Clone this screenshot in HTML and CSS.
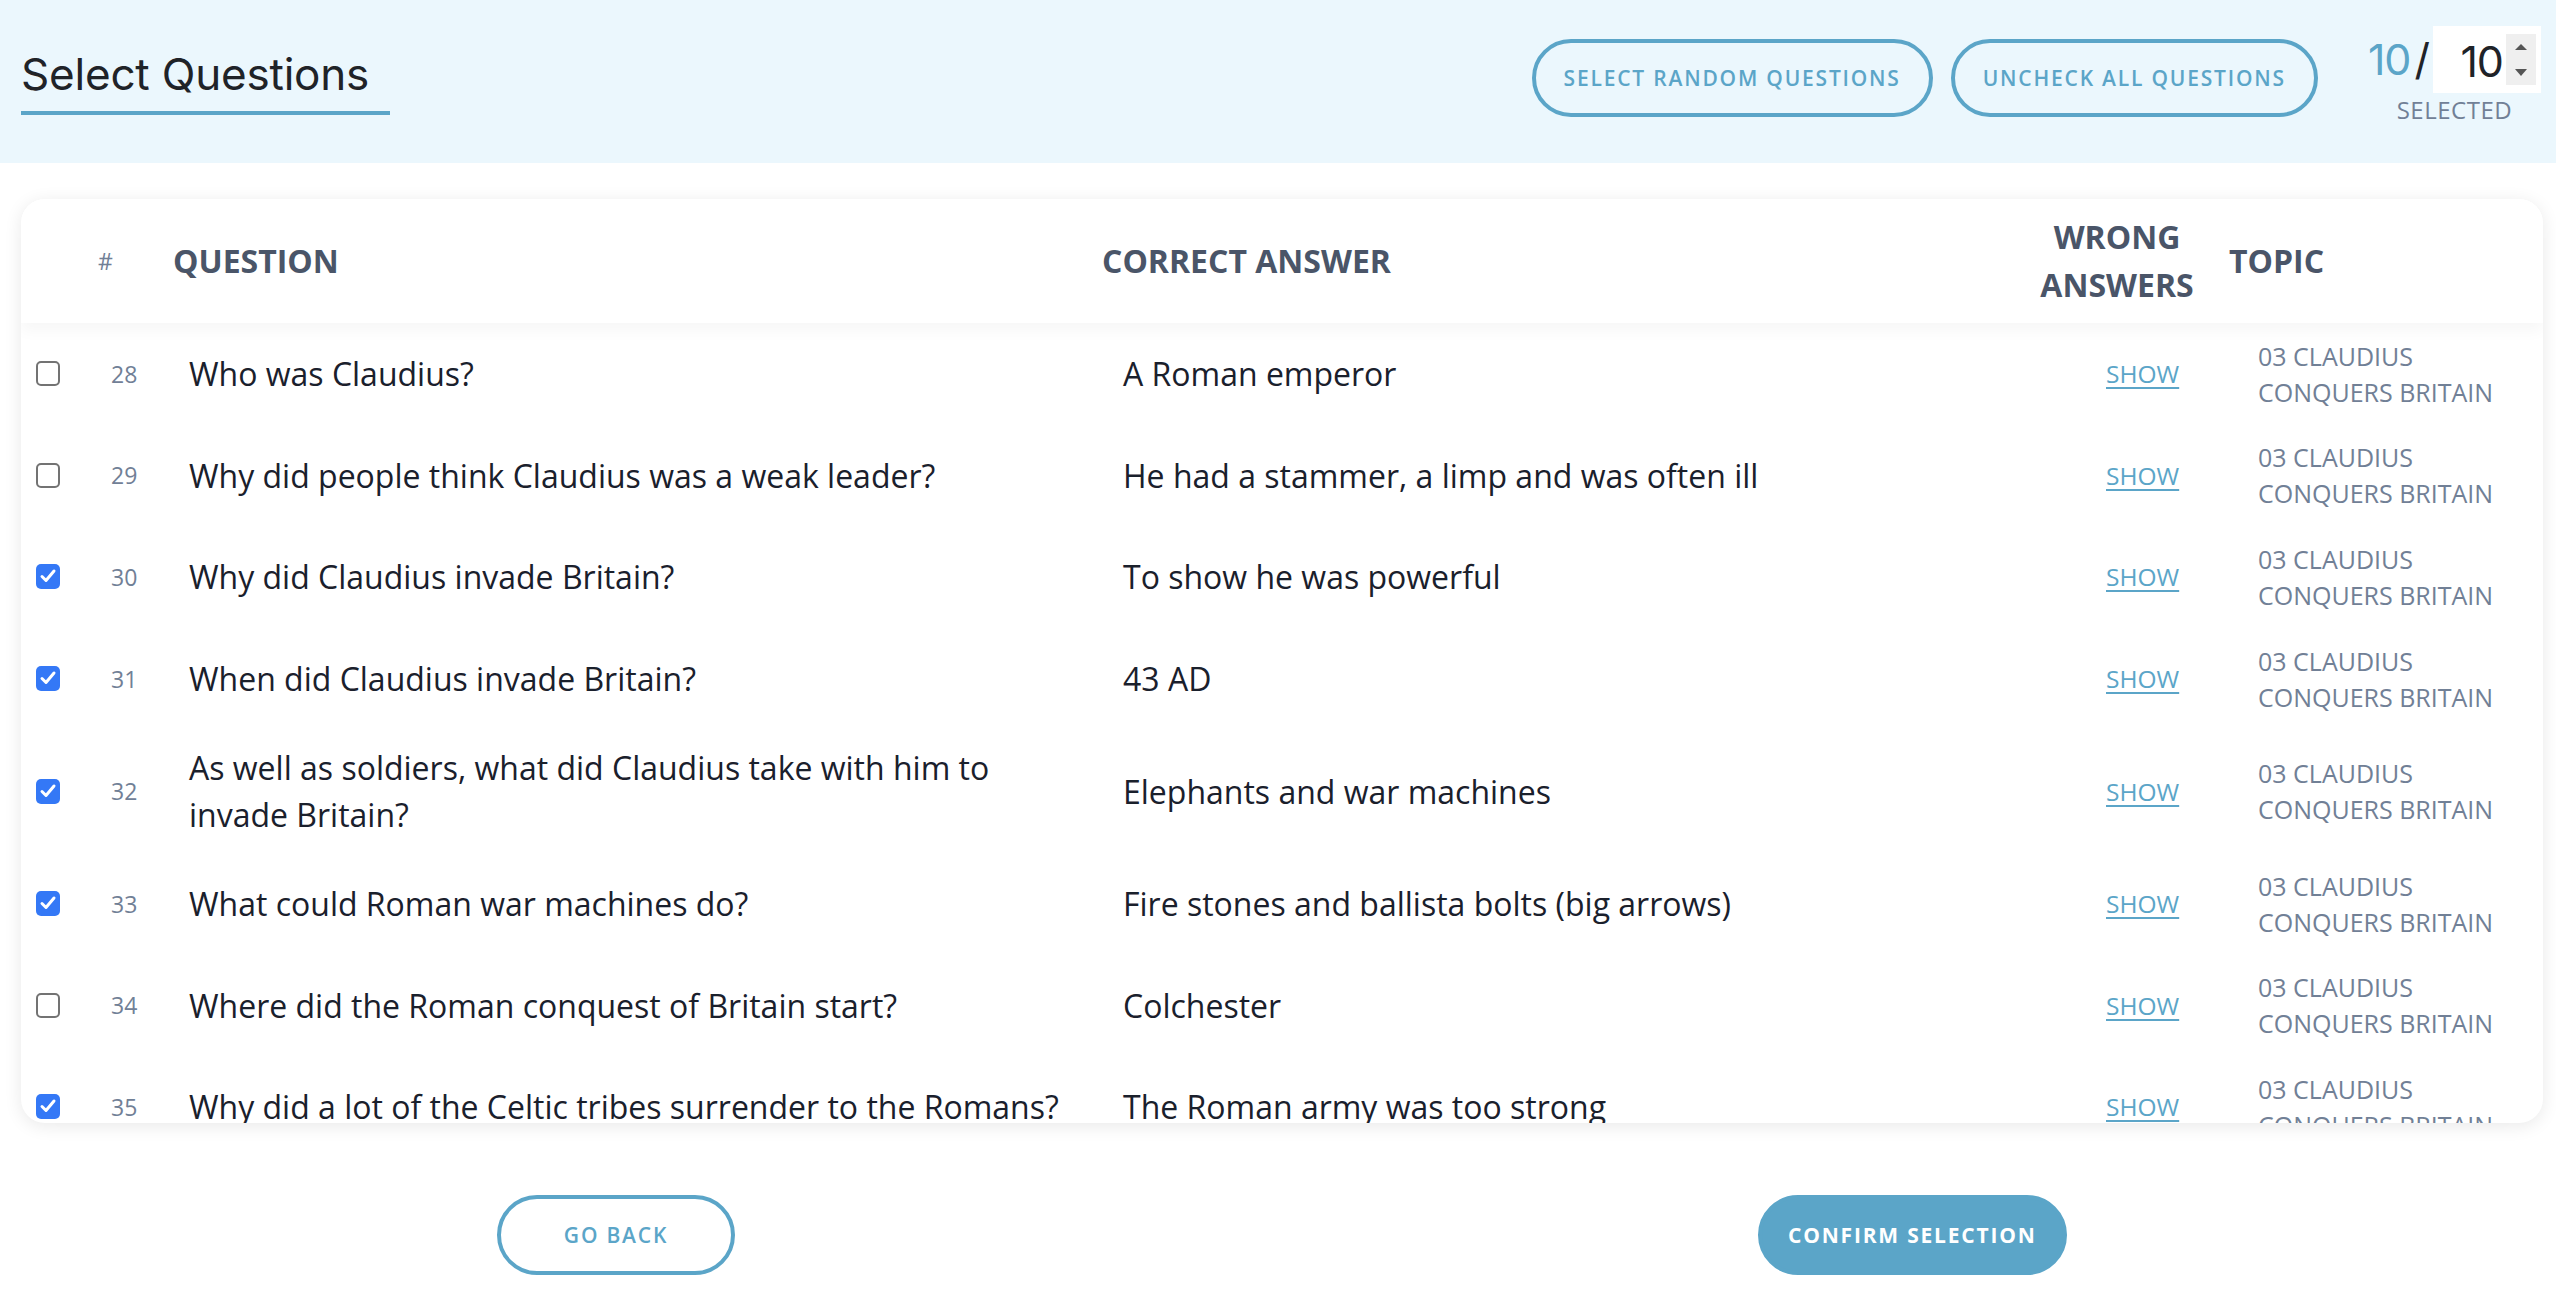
FILE: index.html
```html
<!DOCTYPE html>
<html lang="en">
<head>
<meta charset="utf-8">
<title>Select Questions</title>
<link rel="stylesheet" href="styles.css">
</head>
<body>
<header class="topbar">
  <h1 class="title">Select Questions</h1>
  <div class="top-actions">
    <button class="btn btn-outline">Select random questions</button>
    <button class="btn btn-outline">Uncheck all questions</button>
  </div>
  <div class="counter">
    <div class="counter-row">
      <span class="count-sel">10</span><span class="count-slash">/</span>
      <div class="num-input">
        <span class="num-value">10</span>
        <span class="spinner">
          <svg width="30" height="51" viewBox="0 0 30 51"><path d="M9 16 L21 16 L15 10 Z" fill="#555"/><path d="M9 35 L21 35 L15 42 Z" fill="#555"/></svg>
        </span>
      </div>
    </div>
    <div class="counter-label">SELECTED</div>
  </div>
</header>

<main class="card">
  <div class="thead">
    <div></div>
    <div class="th th-num">#</div>
    <div class="th">QUESTION</div>
    <div class="th">CORRECT ANSWER</div>
    <div class="th th-wrong">WRONG ANSWERS</div>
    <div class="th th-topic">TOPIC</div>
  </div>
  <div class="tbody">
    <div class="row">
      <span class="cb"></span>
      <span class="num">28</span>
      <span class="q">Who was Claudius?</span>
      <span class="a">A Roman emperor</span>
      <a class="show" href="#">SHOW</a>
      <span class="topic">03 CLAUDIUS CONQUERS BRITAIN</span>
    </div>
    <div class="row">
      <span class="cb"></span>
      <span class="num">29</span>
      <span class="q">Why did people think Claudius was a weak leader?</span>
      <span class="a">He had a stammer, a limp and was often ill</span>
      <a class="show" href="#">SHOW</a>
      <span class="topic">03 CLAUDIUS CONQUERS BRITAIN</span>
    </div>
    <div class="row">
      <span class="cb checked"><svg width="24" height="24" viewBox="0 0 24 24"><path d="M6 12.5 L10 16.5 L18 7" fill="none" stroke="#fff" stroke-width="3" stroke-linecap="round" stroke-linejoin="round"/></svg></span>
      <span class="num">30</span>
      <span class="q">Why did Claudius invade Britain?</span>
      <span class="a">To show he was powerful</span>
      <a class="show" href="#">SHOW</a>
      <span class="topic">03 CLAUDIUS CONQUERS BRITAIN</span>
    </div>
    <div class="row">
      <span class="cb checked"><svg width="24" height="24" viewBox="0 0 24 24"><path d="M6 12.5 L10 16.5 L18 7" fill="none" stroke="#fff" stroke-width="3" stroke-linecap="round" stroke-linejoin="round"/></svg></span>
      <span class="num">31</span>
      <span class="q">When did Claudius invade Britain?</span>
      <span class="a">43 AD</span>
      <a class="show" href="#">SHOW</a>
      <span class="topic">03 CLAUDIUS CONQUERS BRITAIN</span>
    </div>
    <div class="row">
      <span class="cb checked"><svg width="24" height="24" viewBox="0 0 24 24"><path d="M6 12.5 L10 16.5 L18 7" fill="none" stroke="#fff" stroke-width="3" stroke-linecap="round" stroke-linejoin="round"/></svg></span>
      <span class="num">32</span>
      <span class="q">As well as soldiers, what did Claudius take with him to invade Britain?</span>
      <span class="a">Elephants and war machines</span>
      <a class="show" href="#">SHOW</a>
      <span class="topic">03 CLAUDIUS CONQUERS BRITAIN</span>
    </div>
    <div class="row">
      <span class="cb checked"><svg width="24" height="24" viewBox="0 0 24 24"><path d="M6 12.5 L10 16.5 L18 7" fill="none" stroke="#fff" stroke-width="3" stroke-linecap="round" stroke-linejoin="round"/></svg></span>
      <span class="num">33</span>
      <span class="q">What could Roman war machines do?</span>
      <span class="a">Fire stones and ballista bolts (big arrows)</span>
      <a class="show" href="#">SHOW</a>
      <span class="topic">03 CLAUDIUS CONQUERS BRITAIN</span>
    </div>
    <div class="row">
      <span class="cb"></span>
      <span class="num">34</span>
      <span class="q">Where did the Roman conquest of Britain start?</span>
      <span class="a">Colchester</span>
      <a class="show" href="#">SHOW</a>
      <span class="topic">03 CLAUDIUS CONQUERS BRITAIN</span>
    </div>
    <div class="row">
      <span class="cb checked"><svg width="24" height="24" viewBox="0 0 24 24"><path d="M6 12.5 L10 16.5 L18 7" fill="none" stroke="#fff" stroke-width="3" stroke-linecap="round" stroke-linejoin="round"/></svg></span>
      <span class="num">35</span>
      <span class="q">Why did a lot of the Celtic tribes surrender to the Romans?</span>
      <span class="a">The Roman army was too strong</span>
      <a class="show" href="#">SHOW</a>
      <span class="topic">03 CLAUDIUS CONQUERS BRITAIN</span>
    </div>
  </div>
</main>

<footer class="actions">
  <button class="btn btn-outline btn-back">Go back</button>
  <button class="btn btn-fill">Confirm selection</button>
</footer>
</body>
</html>
```

FILE: styles.css
```css
* { box-sizing: border-box; }

html, body {
  margin: 0;
  padding: 0;
  background: #ffffff;
  font-family: "Open Sans", "Liberation Sans", sans-serif;
  color: #1a202c;
}

/* ---------- top bar ---------- */
.topbar {
  height: 163px;
  background: #ebf7fd;
  display: flex;
  align-items: center;
  padding: 0 15px 0 21px;
}

.title {
  margin: 0;
  font-family: "Inter", "Liberation Sans", sans-serif;
  font-weight: 400;
  font-size: 44px;
  line-height: 50px;
  color: #1f2328;
  padding: 0 21px 12px 0;
  border-bottom: 4px solid #5ba5c8;
  letter-spacing: -0.2px;
}

.top-actions {
  margin-left: auto;
  display: flex;
  gap: 18px;
  margin-bottom: 7px;
}

.btn {
  font-family: "Open Sans", "Liberation Sans", sans-serif;
  font-weight: 600;
  font-size: 21px;
  letter-spacing: 1.8px;
  text-transform: uppercase;
  height: 78px;
  padding: 0 28px;
  border-radius: 40px;
  cursor: pointer;
}

.btn-outline {
  background: transparent;
  border: 4px solid #5ba5c8;
  color: #5ba5c8;
}

.btn-fill {
  background: #5ba5c8;
  border: 4px solid #5ba5c8;
  color: #ffffff;
  font-weight: 700;
}

.counter {
  margin-left: 50px;
  margin-bottom: 11px;
  display: flex;
  flex-direction: column;
  align-items: center;
}

.counter-row {
  display: flex;
  align-items: center;
  font-family: "Inter", "Liberation Sans", sans-serif;
  font-size: 43px;
  line-height: 1;
}

.count-sel { color: #5ba5c8; letter-spacing: -1px; }
.count-slash { color: #1f2328; margin: 0 3px 0 4px; }

.num-input {
  width: 108px;
  height: 67px;
  background: #ffffff;
  display: flex;
  align-items: center;
  justify-content: flex-end;
  padding-right: 5px;
  gap: 3px;
  color: #1f2328;
}

.num-value { letter-spacing: -1px; padding-top: 4px; }

.spinner {
  width: 30px;
  height: 51px;
  background: #efefef;
  display: block;
}
.spinner svg { display: block; }

.counter-label {
  font-size: 24px;
  line-height: 33px;
  color: #718096;
  letter-spacing: 0.5px;
}

/* ---------- card / table ---------- */
.card {
  margin: 36px 13px 0 21px;
  height: 924px;
  background: #ffffff;
  border-radius: 24px;
  box-shadow: 0 3px 18px rgba(0, 0, 0, 0.09);
  overflow: hidden;
  display: flex;
  flex-direction: column;
}

.thead {
  flex: none;
  height: 124px;
  display: grid;
  grid-template-columns: 77px 75px 929px 910px 210px 1fr;
  align-items: center;
  background: #ffffff;
  box-shadow: 0 8px 14px rgba(0, 0, 0, 0.035);
  position: relative;
  z-index: 1;
}

.th {
  font-weight: 700;
  font-size: 32px;
  line-height: 48px;
  color: #4a5568;
}

.th-num {
  font-weight: 400;
  font-size: 23px;
  color: #718096;
}

.th-wrong { text-align: center; }
.th-topic { padding-left: 7px; }

.tbody {
  flex: 1;
  overflow-y: auto;
  scrollbar-width: none;
}

.row {
  display: grid;
  grid-template-columns: 75px 78px 934px 983px 152px 1fr;
  align-items: center;
  padding: 14.8px 0 14.8px 15px;
}

.cb {
  width: 24px;
  height: 25px;
  border: 2px solid #737373;
  border-radius: 5px;
  background: #ffffff;
  display: block;
}

.cb.checked {
  border: none;
  background: #3478f6;
}
.cb svg { display: block; }

.num {
  font-size: 23px;
  color: #718096;
}

.q, .a {
  font-size: 32px;
  line-height: 47px;
  color: #1a202c;
}

.q { padding-right: 49px; }

.show {
  font-size: 24.5px;
  color: #5ba5c8;
  text-decoration: underline;
  text-decoration-thickness: 2px;
  text-underline-offset: 4px;
}

.topic {
  font-size: 25px;
  line-height: 36px;
  color: #718096;
  max-width: 270px;
}

/* ---------- footer ---------- */
.actions {
  display: flex;
  margin-top: 72px;
  padding-left: 497px;
  gap: 1023px;
}

.actions .btn {
  height: 80px;
  font-size: 21px;
}

.btn-back { min-width: 238px; }
.btn-fill { padding: 0 26px; }
```
